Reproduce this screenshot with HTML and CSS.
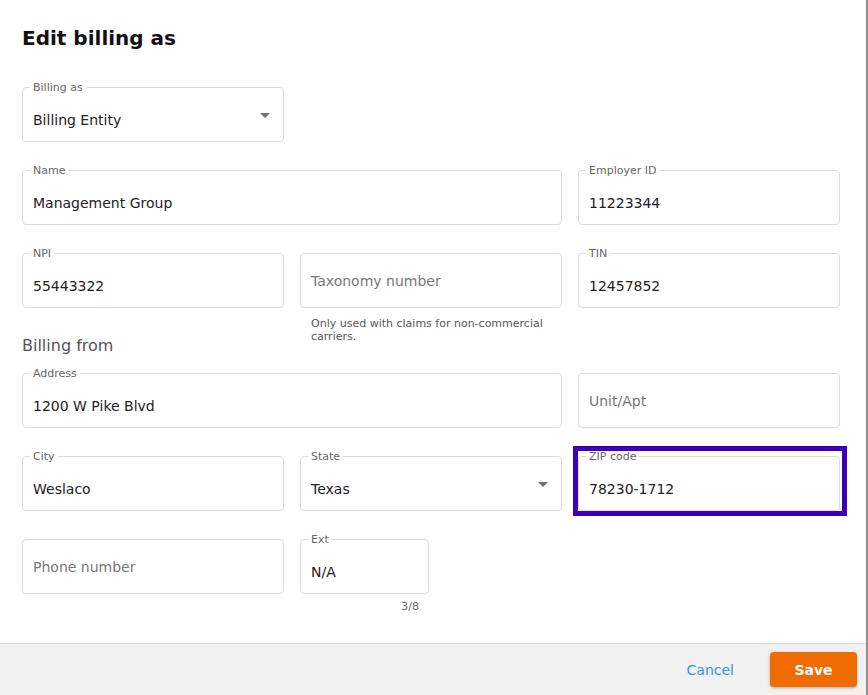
FILE: index.html
```html
<!DOCTYPE html>
<html>
    <head>
        <title>Edit billing as</title>
        <link rel="stylesheet" href="styles.css">
    </head>
    <body>
        <div class="dialog">
            <div class="content">
                <h1 class="title">Edit billing as</h1>

                <div class="row">
                    <div class="field select">
                        <span class="label">Billing as</span>
                        <span class="value">Billing Entity</span>
                        <span class="arrow"></span>
                    </div>
                </div>

                <div class="row">
                    <div class="field span-2">
                        <span class="label">Name</span>
                        <span class="value">Management Group</span>
                    </div>
                    <div class="field">
                        <span class="label">Employer ID</span>
                        <span class="value">11223344</span>
                    </div>
                </div>

                <div class="row">
                    <div class="field">
                        <span class="label">NPI</span>
                        <span class="value">55443322</span>
                    </div>
                    <div class="field empty">
                        <span class="placeholder">Taxonomy number</span>
                    </div>
                    <div class="field">
                        <span class="label">TIN</span>
                        <span class="value">12457852</span>
                    </div>
                </div>

                <div class="row meta">
                    <p class="section">Billing from</p>
                    <p class="help">Only used with claims for non-commercial carriers.</p>
                </div>

                <div class="row">
                    <div class="field span-2">
                        <span class="label">Address</span>
                        <span class="value">1200 W Pike Blvd</span>
                    </div>
                    <div class="field empty">
                        <span class="placeholder">Unit/Apt</span>
                    </div>
                </div>

                <div class="row">
                    <div class="field">
                        <span class="label">City</span>
                        <span class="value">Weslaco</span>
                    </div>
                    <div class="field select">
                        <span class="label">State</span>
                        <span class="value">Texas</span>
                        <span class="arrow"></span>
                    </div>
                    <div class="field marked">
                        <span class="label">ZIP code</span>
                        <span class="value">78230-1712</span>
                    </div>
                </div>

                <div class="row">
                    <div class="field empty">
                        <span class="placeholder">Phone number</span>
                    </div>
                    <div class="ext">
                        <div class="field">
                            <span class="label">Ext</span>
                            <span class="value">N/A</span>
                        </div>
                        <p class="counter">3/8</p>
                    </div>
                </div>
            </div>

            <div class="footer">
                <button class="cancel">Cancel</button>
                <button class="save">Save</button>
            </div>
        </div>
    </body>
</html>
```

FILE: styles.css
```css
html,
body{
    margin: 0;
    height: 100%;
}
body{
    background-color: #8e8e8e;
    font-family: "DejaVu Sans", Verdana, sans-serif;
    color: #222;
}
.dialog{
    width: 866px;
    height: 695px;
    background-color: white;
    display: flex;
    flex-direction: column;
}
.content{
    padding: 0 27px 0 22px;
}
.title{
    margin: 0;
    padding-top: 26px;
    font-size: 20px;
    line-height: 24px;
    font-weight: bold;
    color: #111;
}
.row{
    display: grid;
    grid-template-columns: 262px 262px 262px;
    column-gap: 16px;
    margin-top: 28px;
}
.row:nth-of-type(1){
    margin-top: 37px;
}
.field{
    position: relative;
    box-sizing: border-box;
    height: 55px;
    border: 1px solid #dcdcdc;
    border-radius: 4px;
    padding: 0 10px;
}
.span-2{
    grid-column: span 2;
}
.label{
    position: absolute;
    top: -6px;
    left: 7px;
    padding: 0 3px;
    background-color: white;
    font-size: 11px;
    line-height: 12px;
    color: #666;
}
.value{
    display: block;
    padding-top: 22px;
    font-size: 14px;
    line-height: 20px;
    color: #222;
}
.empty{
    display: flex;
    align-items: center;
}
.placeholder{
    font-size: 14px;
    color: #777;
}
.arrow{
    position: absolute;
    right: 13px;
    top: 25px;
    border-left: 5px solid transparent;
    border-right: 5px solid transparent;
    border-top: 5px solid #707070;
}
.marked::after{
    content: "";
    position: absolute;
    top: -11px;
    left: -6px;
    right: -8px;
    bottom: -6px;
    border: 5px solid #3d00b5;
}
.meta{
    margin-top: 9px;
}
.section{
    margin: 0;
    padding-top: 19px;
    font-size: 16px;
    line-height: 20px;
    color: #555;
    align-self: end;
}
.help{
    margin: 0;
    padding-left: 11px;
    font-size: 11px;
    line-height: 13px;
    color: #555;
    width: 250px;
}
.meta + .row{
    margin-top: 17px;
}
.ext{
    width: 129px;
}
.counter{
    margin: 6px 10px 0 0;
    text-align: right;
    font-size: 11px;
    line-height: 13px;
    color: #666;
}
.footer{
    margin-top: auto;
    height: 51px;
    border-top: 1px solid #d9d9d9;
    background-color: #f1f1f1;
    display: flex;
    align-items: center;
    justify-content: flex-end;
    padding-right: 9px;
}
.cancel{
    background-color: transparent;
    border: none;
    font-family: "DejaVu Sans", Verdana, sans-serif;
    font-size: 14px;
    color: #3592e4;
    margin-right: 30px;
    cursor: pointer;
}
.save{
    width: 87px;
    height: 35px;
    background-color: #ef6c00;
    border: none;
    border-radius: 4px;
    box-shadow: 0 1px 3px rgba(0,0,0,0.3);
    font-family: "DejaVu Sans", Verdana, sans-serif;
    font-size: 14px;
    font-weight: bold;
    color: white;
    cursor: pointer;
}
```
